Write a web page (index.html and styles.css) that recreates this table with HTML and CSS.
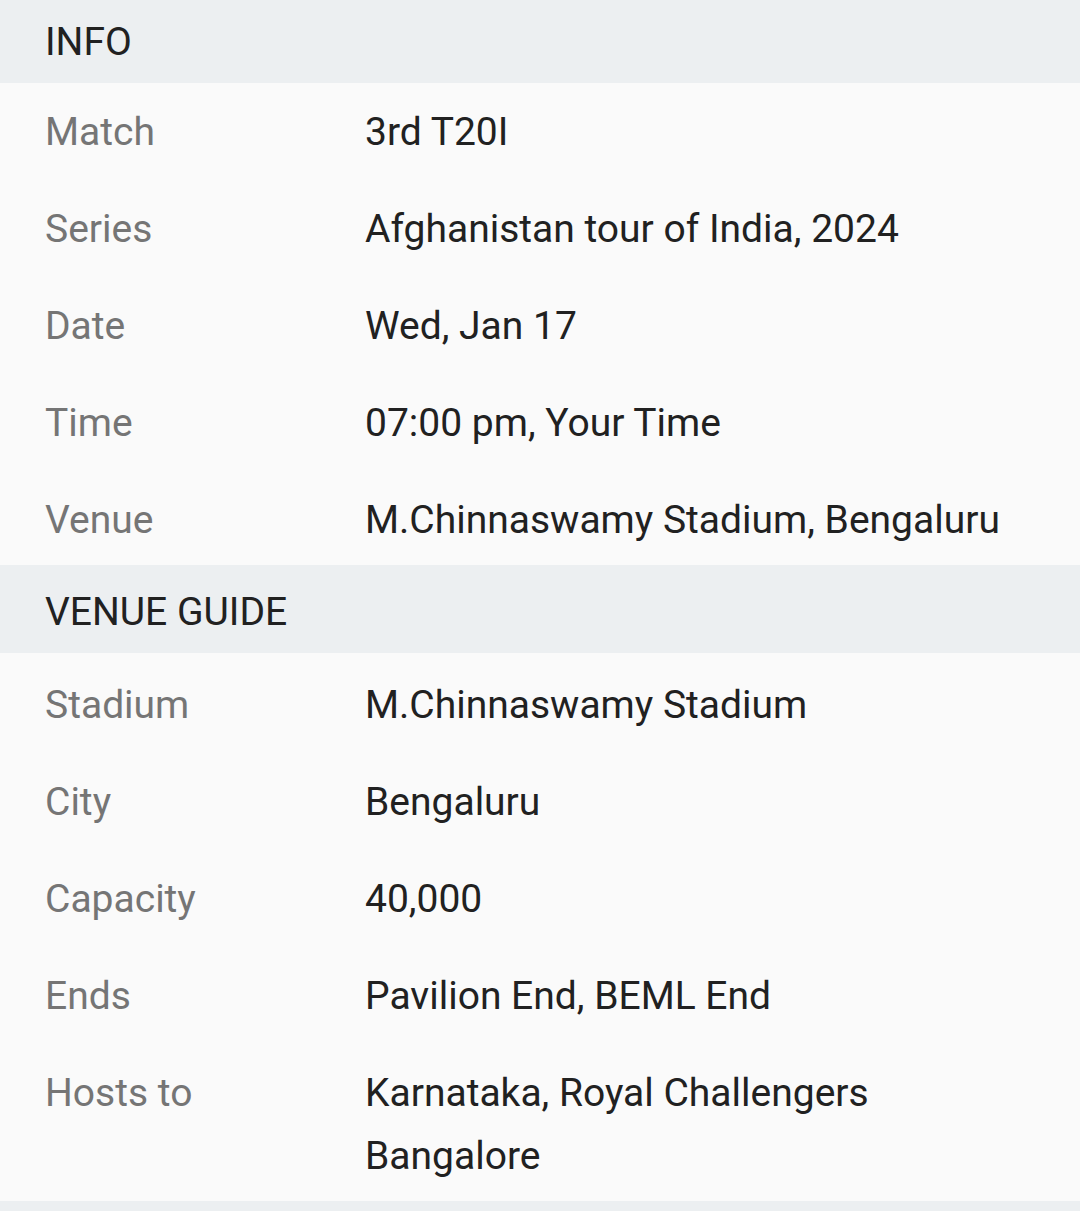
FILE: index.html
```html
<!DOCTYPE html>
<html lang="en">
<head>
    <meta charset="UTF-8">
    <meta name="viewport" content="width=device-width, initial-scale=1.0">
    <title>Match Info</title>
    <link rel="stylesheet" href="styles.css">
</head>
<body>
    <div class="page">
        <div class="section-header">INFO</div>
        <div class="info-list info-list--tight">
            <div class="info-row">
                <div class="info-label">Match</div>
                <div class="info-value">3rd T20I</div>
            </div>
            <div class="info-row">
                <div class="info-label">Series</div>
                <div class="info-value">Afghanistan tour of India, 2024</div>
            </div>
            <div class="info-row">
                <div class="info-label">Date</div>
                <div class="info-value">Wed, Jan 17</div>
            </div>
            <div class="info-row">
                <div class="info-label">Time</div>
                <div class="info-value">07:00 pm, Your Time</div>
            </div>
            <div class="info-row">
                <div class="info-label">Venue</div>
                <div class="info-value">M.Chinnaswamy Stadium, Bengaluru</div>
            </div>
        </div>

        <div class="section-header">VENUE GUIDE</div>
        <div class="info-list info-list--spaced">
            <div class="info-row">
                <div class="info-label">Stadium</div>
                <div class="info-value">M.Chinnaswamy Stadium</div>
            </div>
            <div class="info-row">
                <div class="info-label">City</div>
                <div class="info-value">Bengaluru</div>
            </div>
            <div class="info-row">
                <div class="info-label">Capacity</div>
                <div class="info-value">40,000</div>
            </div>
            <div class="info-row">
                <div class="info-label">Ends</div>
                <div class="info-value">Pavilion End, BEML End</div>
            </div>
            <div class="info-row info-row--last">
                <div class="info-label">Hosts to</div>
                <div class="info-value">Karnataka, Royal Challengers Bangalore</div>
            </div>
        </div>
        <div class="section-header section-header--empty"></div>
    </div>
</body>
</html>
```

FILE: styles.css
```css
* {
    padding: 0;
    margin: 0;
    box-sizing: border-box;
}
body {
    font-family: Roboto, "Noto Sans", Arial, sans-serif;
    background-color: #fafafa;
    overflow: hidden;
}
.page {
    margin-top: -5px;
}
.section-header {
    height: 88px;
    display: flex;
    align-items: center;
    padding: 5px 45px 0;
    background-color: #eceff1;
    color: #212121;
    font-size: 39px;
}
.section-header--empty {
    height: 40px;
}
.info-list {
    background-color: #fafafa;
}
.info-list--tight {
    margin-bottom: -3px;
}
.info-list--spaced {
    padding-top: 3px;
}
.info-row {
    display: flex;
    padding: 18px 45px 16px;
    font-size: 39px;
    line-height: 63px;
}
.info-row--last {
    padding-bottom: 13px;
}
.info-label {
    width: 320px;
    flex-shrink: 0;
    color: #757575;
}
.info-value {
    flex: 1;
    color: #212121;
}
```
